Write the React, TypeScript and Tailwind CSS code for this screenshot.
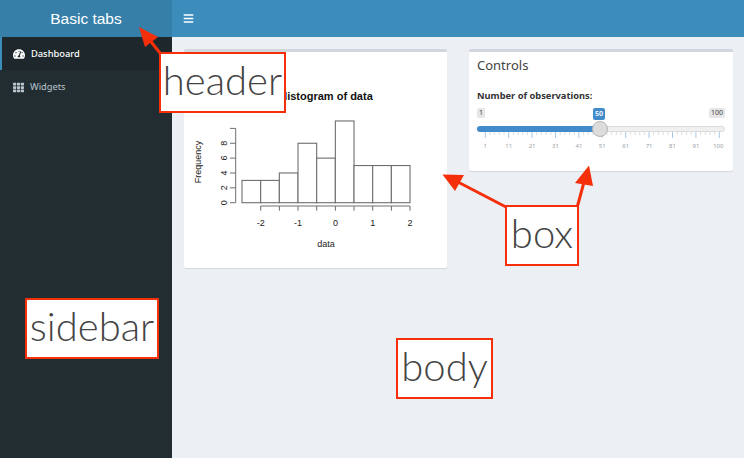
import { FaTachometerAlt, FaTh, FaBars } from "react-icons/fa";

const sans = "[font-family:'Noto_Sans',sans-serif]";

const bars = [3, 3, 4, 8, 6, 11, 5, 5, 5];

function Histogram() {
  // The svg is placed at box origin (184,52): x/y below are page coordinates minus that.
  const X0 = 242 - 184;
  const W = 18.67;
  const Y0 = 202.7 - 52;
  const U = 7.43;
  const stroke = "#6e6e6e";
  const font = "'Liberation Sans', sans-serif";
  return (
    <svg width="263" height="216" viewBox="0 0 263 216" className="block">
      <text x="142" y="48" textAnchor="middle" fontFamily={font} fontSize="11" fontWeight="700" fill="#111">Histogram of data</text>
      {bars.map((b, i) => (
        <rect key={i} x={X0 + i * W} y={Y0 - b * U} width={W} height={b * U} fill="white" stroke={stroke} strokeWidth="1.1" />
      ))}
      <path d={`M51.7 ${Y0}V${Y0 - 10 * U}`} stroke={stroke} fill="none" />
      {[0, 2, 4, 6, 8, 10].map((v) => (
        <path key={v} d={`M46 ${Y0 - v * U}H51.7`} stroke={stroke} fill="none" />
      ))}
      {[0, 2, 4, 6, 8].map((v) => (
        <text key={v} transform={`translate(43 ${Y0 - v * U}) rotate(-90)`} textAnchor="middle" fontFamily={font} fontSize="9" fill="#222">{v}</text>
      ))}
      <path d="M76.7 154V158.7M95.4 154V158.7M114 154V158.7M132.7 154V158.7M151.4 154V158.7M170 154V158.7M188.7 154V158.7M207.4 154V158.7M226 154V158.7M76.7 154H226" stroke={stroke} fill="none" />
      {[["-2", 76.7], ["-1", 114], ["0", 151.4], ["1", 188.7], ["2", 226]].map(([t, x]) => (
        <text key={t} x={x} y="174" textAnchor="middle" fontFamily={font} fontSize="9" fill="#222">{t}</text>
      ))}
      <text x="142" y="195" textAnchor="middle" fontFamily={font} fontSize="9" fill="#222">data</text>
      <text transform="translate(17 110) rotate(-90)" textAnchor="middle" fontFamily={font} fontSize="9" fill="#222">Frequency</text>
    </svg>
  );
}

function Slider() {
  const majors = Array.from({ length: 11 }, (_, i) => i);
  const start = 8.3;
  const step = 23.4;
  return (
    <div className="relative h-[44px] w-[248px]">
      <span className="absolute left-0 top-0 h-[10px] rounded-[2px] bg-[#e6e6e6] px-[2px] text-[7px] leading-[10px] text-[#444]">1</span>
      <span className="absolute left-[116px] top-0 h-[12px] rounded-[2px] bg-[#428bca] px-[2px] text-[7px] font-semibold leading-[12px] text-white">50</span>
      <span className="absolute right-0 top-0 h-[10px] rounded-[2px] bg-[#e6e6e6] px-[2px] text-[7px] leading-[10px] text-[#444]">100</span>
      <div className="absolute left-0 right-0 top-[18px] h-[6px] rounded-full border border-[#dcdcdc] bg-[#f0f0f0]" />
      <div className="absolute left-0 top-[18px] h-[6px] w-[123px] rounded-l-full bg-[#428bca]" />
      <svg width="248" height="26" className="absolute left-0 top-[24px] block">
        {majors.map((m) => (
          <g key={m}>
            <path d={`M${start + m * step} 0V6`} stroke="#a9c9e6" fill="none" />
            {m < 10 && [1, 2, 3, 4].map((k) => (
              <path key={k} d={`M${start + (m + k / 5) * step} 0V3`} stroke="#dddddd" fill="none" />
            ))}
            <text x={m === 10 ? start + m * step - 1 : start + m * step} y="16" textAnchor="middle" fontSize="6" fill="#9aa0a6" fontFamily="'Noto Sans', sans-serif">
              {m === 10 ? 100 : m * 10 + 1}
            </text>
          </g>
        ))}
      </svg>
      <div className="absolute left-[115px] top-[13px] h-[16px] w-[16px] rounded-full border border-[#b5b5b5] bg-[#dcdcdc]" />
    </div>
  );
}

function Note({ text, className }: { text: string; className: string }) {
  return (
    <div className={`absolute flex items-center justify-center border-2 border-[#f52f0a] bg-white pb-[5px] text-[40px] font-light text-[#444] [font-family:Lato,sans-serif] ${className}`}>
      {text}
    </div>
  );
}

export default function App() {
  return (
    <div className={`relative flex h-[458px] w-[744px] flex-col overflow-hidden bg-[#ecf0f5] ${sans}`}>
      <header className="flex h-[37px] shrink-0 bg-[#3c8dbc] text-white">
        <div className="flex w-[172px] items-center justify-center bg-[#367fa9] text-[15.5px] [font-family:'Liberation_Sans',sans-serif]">
          Basic tabs
        </div>
        <div className="flex items-center pl-[11px]">
          <FaBars size={11} />
        </div>
      </header>
      <div className="flex flex-1">
        <aside className="w-[172px] shrink-0 bg-[#222d32] text-[9.3px]">
          <div className="flex h-[33px] items-center gap-[6px] border-l-[2px] border-[#3c8dbc] bg-[#1e282c] pl-[11px] pt-[1px] font-medium text-white">
            <FaTachometerAlt size={12} />
            <span>Dashboard</span>
          </div>
          <div className="flex h-[33px] items-center gap-[6px] pl-[13px] pt-[1px] text-[#b8c7ce]">
            <FaTh size={11} />
            <span>Widgets</span>
          </div>
        </aside>
        <main className="flex items-start gap-[22px] pl-[12px] pt-[12px]">
          <section className="h-[219px] w-[263px] rounded-[2px] border-t-[3px] border-[#d2d6de] bg-white shadow-[0_1px_1px_rgba(0,0,0,0.1)]">
            <Histogram />
          </section>
          <section className="h-[122px] w-[264px] rounded-[2px] border-t-[3px] border-[#d2d6de] bg-white px-[8px] shadow-[0_1px_1px_rgba(0,0,0,0.1)]">
            <h3 className="pt-[4px] text-[13px] leading-[18px] text-[#444]">Controls</h3>
            <div className="pt-[16px] text-[9.3px] font-bold leading-[12px] text-[#333]">Number of observations:</div>
            <div className="pt-[6px]">
              <Slider />
            </div>
          </section>
        </main>
      </div>

      <svg width="744" height="458" className="pointer-events-none absolute left-0 top-0">
        <g stroke="#f52f0a" strokeWidth="3" fill="#f52f0a">
          <path d="M160 53L148 38" fill="none" />
          <path d="M139 27L158 37L145 47Z" stroke="none" />
          <path d="M506 207L456 181" fill="none" />
          <path d="M442.5 174.5L464 175L455 191Z" stroke="none" />
          <path d="M577.5 206L584 182" fill="none" />
          <path d="M589 165.5L593 186L575 183Z" stroke="none" />
        </g>
      </svg>
      <Note text="header" className="left-[159px] top-[52px] h-[61px] w-[127px]" />
      <Note text="sidebar" className="left-[25px] top-[298px] h-[61px] w-[134px]" />
      <Note text="body" className="left-[396px] top-[338px] h-[61px] w-[97px]" />
      <Note text="box" className="left-[505px] top-[205px] h-[61px] w-[74px]" />
    </div>
  );
}
